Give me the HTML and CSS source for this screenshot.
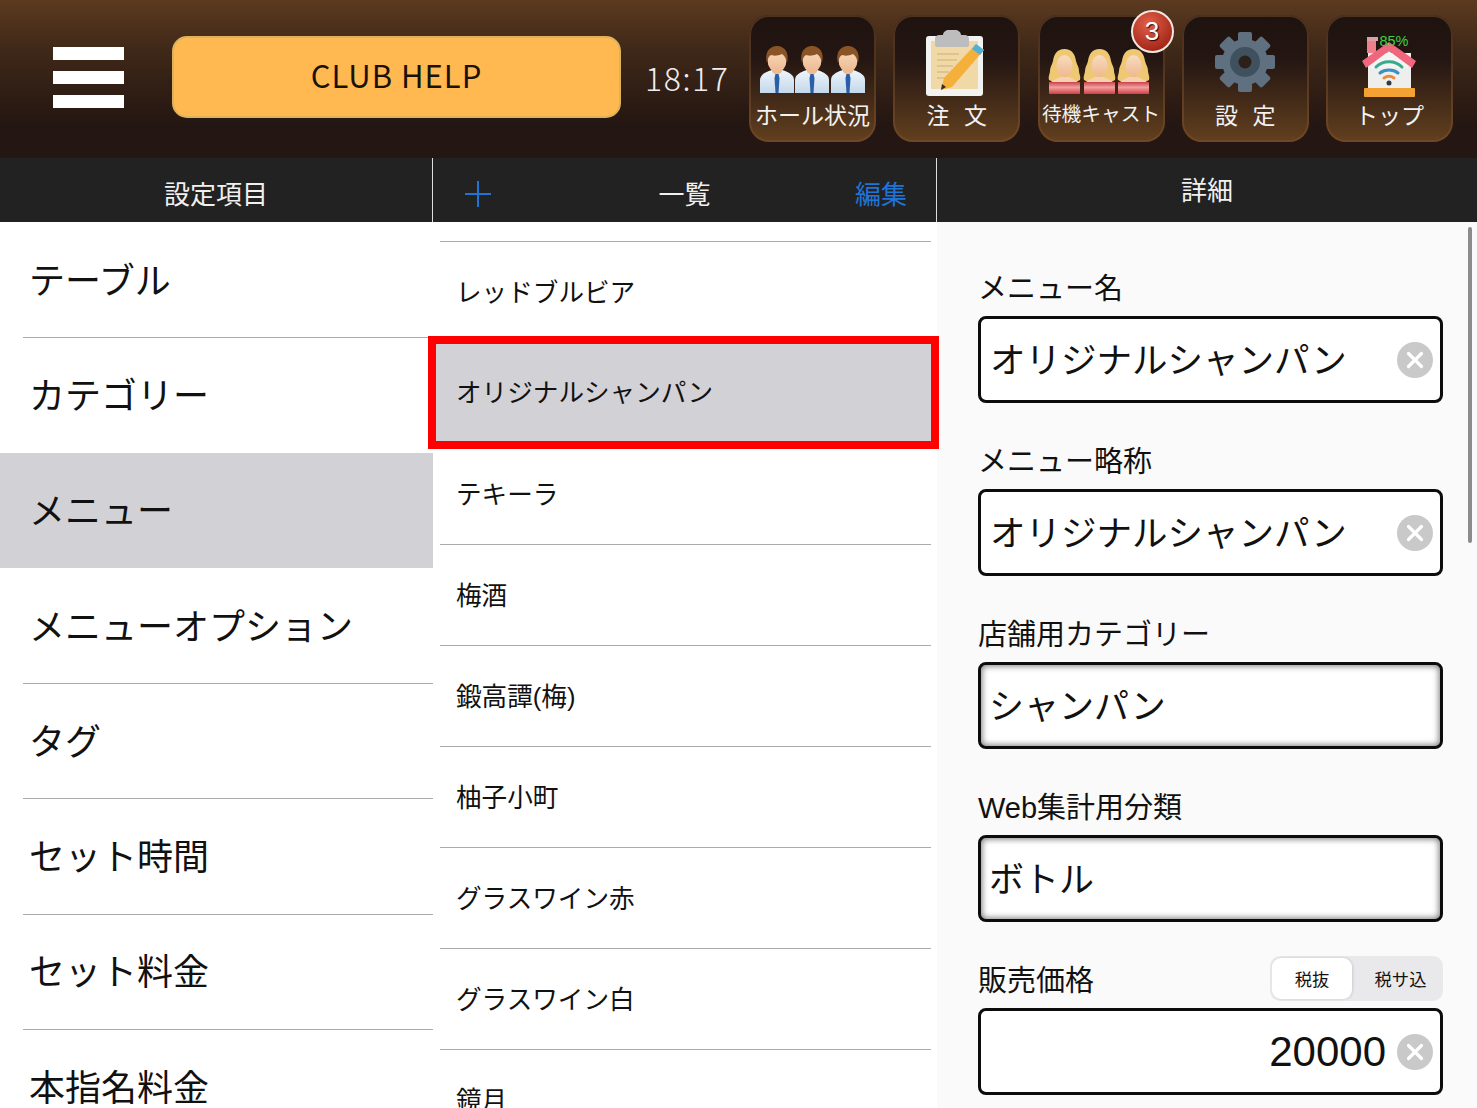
FILE: index.html
```html
<!DOCTYPE html>
<html lang="ja">
<head>
<meta charset="utf-8">
<title>CLUB HELP</title>
<link rel="stylesheet" href="styles.css">
</head>
<body>
<svg class="defs" width="0" height="0" aria-hidden="true">
  <defs>
    <linearGradient id="skin" x1="0" y1="0" x2="0" y2="1"><stop offset="0" stop-color="#f8dcc0"/><stop offset="1" stop-color="#eeb88e"/></linearGradient>
    <linearGradient id="shirt" x1="0" y1="0" x2="0" y2="1"><stop offset="0" stop-color="#eef5fb"/><stop offset="1" stop-color="#c3d8ea"/></linearGradient>
    <linearGradient id="dress" x1="0" y1="0" x2="0" y2="1"><stop offset="0" stop-color="#c9434a"/><stop offset=".45" stop-color="#f0a0a0"/><stop offset="1" stop-color="#d63c44"/></linearGradient>
    <symbol id="man" viewBox="0 0 36 48">
      <path d="M1 47V34c0-5 5-8 12-10h10c7 2 12 5 12 10v13z" fill="url(#shirt)"/>
      <path d="M13 18h10v8l-5 4-5-4z" fill="#eebd96"/>
      <ellipse cx="18" cy="14" rx="9.500" ry="12.500" fill="url(#skin)"/>
      <path d="M8 17C5 5 12 0 18 0s13 5 10 17c-1-5-3-8-5-9-4 2-9 2-11 1-2 1-3 3-4 8z" fill="#8a5426"/>
      <path d="M16.500 28h3l1 4-1 15h-3l-1-15z" fill="#2a5ea6"/>
    </symbol>
    <symbol id="woman" viewBox="0 0 35 46">
      <path d="M17.500 0C10 0 7 5 6 12c-1 4-3 6-3 10 0 3-2 5-1 9l6 3h19l6-3c1-4-1-6-1-9 0-4-2-6-3-10C28 5 25 0 17.500 0z" fill="#eec873"/>
      <path d="M3 34c3-3 8-5 10-6h9c2 1 7 3 10 6v0H3z" fill="#f6d0b0"/>
      <ellipse cx="17.500" cy="17" rx="8" ry="11" fill="url(#skin)"/>
      <path d="M2 33h31v12H2z" fill="url(#dress)"/>
    </symbol>
    <symbol id="clear" viewBox="0 0 36 36">
      <circle cx="18" cy="18" r="18" fill="#c9c9c9"/>
      <path d="M11.500 11.500l13 13m0-13l-13 13" stroke="#fff" stroke-width="3.200" stroke-linecap="round"/>
    </symbol>
  </defs>
</svg>

<header class="topbar">
  <div class="burger"><span></span><span></span><span></span></div>
  <div class="club-btn">CLUB HELP</div>
  <div class="clock">18:17</div>
  <nav class="tools">
    <div class="tool">
      <svg class="tool-icon" viewBox="0 0 127 86">
        <use href="#man" x="10" y="31" width="36" height="48"/>
        <use href="#man" x="45" y="31" width="36" height="48"/>
        <use href="#man" x="81" y="31" width="36" height="48"/>
      </svg>
      <span class="tool-label">ホール状況</span>
    </div>
    <div class="tool">
      <svg class="tool-icon" viewBox="0 0 127 86">
        <rect x="33" y="21" width="57" height="60" rx="3" fill="#f2f2f0"/>
        <rect x="38" y="26" width="47" height="48" fill="#f0d9a6"/>
        <path d="M44 39h22M44 45h20M44 51h16M44 57h12M44 63h10" stroke="#d8bd88" stroke-width="1.500"/>
        <path d="M42 24c0-3 2-4 5-4h3c0-3 3-5 6-5h6c3 0 6 2 6 5h3c3 0 5 1 5 4v6c0 1-1 2-2 2H44c-1 0-2-1-2-2z" fill="#bdbdbd"/>
        <path d="M83 29l8 6-32 37-11 3 3-12z" fill="#f5b03c"/>
        <path d="M83 29l8 6-4 5-8-6z" fill="#4fb0dc"/>
        <path d="M48 75l1-6 4 3z" fill="#3a2a20"/>
      </svg>
      <span class="tool-label tool-spaced">注 文</span>
    </div>
    <div class="tool tool-alert">
      <svg class="tool-icon" viewBox="0 0 127 86">
        <use href="#woman" x="9" y="34" width="35" height="46"/>
        <use href="#woman" x="44" y="34" width="35" height="46"/>
        <use href="#woman" x="78" y="34" width="35" height="46"/>
      </svg>
      <span class="tool-label tool-small">待機キャスト</span>
      <span class="badge">3</span>
    </div>
    <div class="tool">
      <svg class="tool-icon" viewBox="0 0 127 86">
        <g fill="#5f7080" transform="translate(63 47)">
          <circle r="23"/>
          <rect x="-7" y="-30" width="14" height="60" rx="2"/>
          <rect x="-7" y="-30" width="14" height="60" rx="2" transform="rotate(45)"/>
          <rect x="-7" y="-30" width="14" height="60" rx="2" transform="rotate(90)"/>
          <rect x="-7" y="-30" width="14" height="60" rx="2" transform="rotate(135)"/>
          <circle r="15" fill="#3f505e"/>
          <circle r="6.500" fill="#2c2019"/>
        </g>
      </svg>
      <span class="tool-label tool-spaced">設 定</span>
    </div>
    <div class="tool">
      <svg class="tool-icon" viewBox="0 0 127 86">
        <rect x="41" y="22" width="9" height="16" fill="#f07f8c"/>
        <rect x="41" y="22" width="11" height="4" fill="#d9a0a8"/>
        <rect x="42" y="38" width="43" height="37" fill="#eeeeec"/>
        <path d="M36 46l27-19 27 19-4 7-23-17-23 17z" fill="#f0667c"/>
        <path d="M44 51l19-15 19 15v2H44z" fill="#f4f4f2"/>
        <rect x="38" y="73" width="51" height="9" rx="1" fill="#f5a234"/>
        <g fill="none" stroke-width="3" stroke-linecap="round">
          <path d="M50 52c7-7 19-7 26 0" stroke="#37a98c"/>
          <path d="M54 58c5-4 13-4 18 0" stroke="#3a8fc4"/>
          <path d="M58 63c3-2 7-2 10 0" stroke="#ea8a3a"/>
        </g>
        <circle cx="63" cy="68" r="2.500" fill="#2c3a4a"/>
        <text x="68" y="31" class="battery">85%</text>
      </svg>
      <span class="tool-label">トップ</span>
    </div>
  </nav>
</header>

<div class="subbar">
  <div class="sub sub-left">設定項目</div>
  <div class="sub sub-mid">
    <svg class="plus" viewBox="0 0 26 26"><path d="M13 0v26M0 13h26" stroke="#1f74d6" stroke-width="2"/></svg>
    <span>一覧</span>
    <span class="edit">編集</span>
  </div>
  <div class="sub sub-right">詳細</div>
</div>

<main class="panes">
  <ul class="settings">
    <li>テーブル</li>
    <li class="ruled">カテゴリー</li>
    <li class="active">メニュー</li>
    <li>メニューオプション</li>
    <li class="ruled">タグ</li>
    <li class="ruled">セット時間</li>
    <li class="ruled">セット料金</li>
    <li class="ruled">本指名料金</li>
  </ul>
  <ul class="items">
    <li>レッドブルビア</li>
    <li class="picked">オリジナルシャンパン</li>
    <li>テキーラ</li>
    <li>梅酒</li>
    <li>鍛高譚(梅)</li>
    <li>柚子小町</li>
    <li>グラスワイン赤</li>
    <li>グラスワイン白</li>
    <li>鏡月</li>
  </ul>
  <section class="detail">
    <div class="field">
      <div class="field-label">メニュー名</div>
      <div class="box"><span>オリジナルシャンパン</span><svg class="clear"><use href="#clear"/></svg></div>
    </div>
    <div class="field">
      <div class="field-label">メニュー略称</div>
      <div class="box"><span>オリジナルシャンパン</span><svg class="clear"><use href="#clear"/></svg></div>
    </div>
    <div class="field">
      <div class="field-label">店舗用カテゴリー</div>
      <div class="box box-select"><span>シャンパン</span></div>
    </div>
    <div class="field">
      <div class="field-label">Web集計用分類</div>
      <div class="box box-select"><span>ボトル</span></div>
    </div>
    <div class="field">
      <div class="field-label field-row">
        <span>販売価格</span>
        <div class="segment"><span class="seg seg-on">税抜</span><span class="seg seg-off">税サ込</span></div>
      </div>
      <div class="box box-num"><span>20000</span><svg class="clear"><use href="#clear"/></svg></div>
    </div>
    <div class="scrollbar"></div>
  </section>
</main>
</body>
</html>
```
FILE: styles.css
```css
* { box-sizing: border-box; }
html, body { margin: 0; padding: 0; }
body {
  width: 1477px;
  height: 1108px;
  overflow: hidden;
  background: #fff;
  color: #111;
  font-family: "Liberation Sans", "Noto Sans CJK JP", sans-serif;
}
ul { list-style: none; margin: 0; padding: 0; }
.defs { position: absolute; }

.topbar {
  height: 158px;
  display: flex;
  align-items: center;
  background: linear-gradient(#5c3a20 0, #3f2818 50px, #241612 125px, #241612 100%);
}
.burger {
  width: 71px;
  margin: 0 0 4px 53px;
  display: flex;
  flex-direction: column;
  gap: 11px;
}
.burger span { height: 13px; background: #fff; }
.club-btn {
  width: 449px;
  height: 82px;
  margin: 0 0 5px 48px;
  padding-bottom: 4px;
  display: flex;
  align-items: center;
  justify-content: center;
  background: #ffb950;
  border: 2px solid #dcb25c;
  border-radius: 15px;
  color: #1a1208;
  font-family: "Noto Sans CJK JP", sans-serif;
  font-size: 31px;
  font-weight: 400;
  letter-spacing: 1px;
  white-space: nowrap;
}
.clock {
  margin: 0 0 4px 24px;
  color: #eee;
  font-family: "Noto Sans CJK JP", sans-serif;
  font-size: 32px;
  font-weight: 300;
  letter-spacing: 1.600px;
}
.tools {
  margin: 0 0 1px auto;
  padding-right: 24px;
  display: flex;
  gap: 17.250px;
}
.tool {
  position: relative;
  width: 127px;
  height: 127px;
  border-radius: 20px;
  background: linear-gradient(#1e1310 0, #241612 35%, #63401f 100%);
  box-shadow: inset 0 0 0 2px rgba(125, 80, 42, .5);
  display: flex;
  flex-direction: column;
  align-items: center;
}
.tool-icon { width: 127px; height: 86px; flex: none; display: block; }
.tool-label {
  height: 30px;
  line-height: 30px;
  color: #f2f2f2;
  font-size: 23px;
  white-space: nowrap;
}
.tool-spaced { word-spacing: 8px; }
.tool-small { font-size: 19.700px; line-height: 26px; }
.badge {
  position: absolute;
  top: -5px;
  right: -19px;
  width: 43px;
  height: 43px;
  margin-right: 10px;
  display: flex;
  align-items: center;
  justify-content: center;
  border-radius: 50%;
  border: 2px solid #f3e7e0;
  background: radial-gradient(circle at 40% 30%, #e2604a, #8f1408);
  color: #fff;
  font-size: 26px;
  text-shadow: 1px 1px 1px #300;
}
.battery {
  font-family: "Liberation Sans", sans-serif;
  font-size: 14.500px;
  fill: #3fd13f;
  text-anchor: middle;
}

.subbar {
  height: 64px;
  display: flex;
  background: #222;
  color: #f0f0f0;
  font-size: 26px;
}
.sub { display: flex; align-items: center; justify-content: center; }
.sub-left { width: 433px; border-right: 1px solid #ddd; padding: 10px 0 6px; }
.sub-mid {
  width: 504px;
  border-right: 1px solid #ddd;
  display: grid;
  grid-template-columns: 1fr auto 1fr;
  padding: 10px 32px 6px;
}
.plus { width: 26px; height: 26px; margin-top: 4px; justify-self: start; }
.edit { color: #1f74d6; justify-self: end; margin-right: -3px; }
.sub-right { flex: 1; padding: 3px 0 7px; }

.panes { height: 886px; display: flex; overflow: hidden; }
.settings { width: 433px; flex: none; }
.settings li {
  height: 115.300px;
  padding: 0 0 4px 29px;
  display: flex;
  align-items: center;
  font-size: 36px;
}
.settings li.ruled { background: linear-gradient(#aaa, #aaa) no-repeat 23px 0 / 410px 1px; }
.settings li.active { background: #d1d1d6; }

.items {
  width: 504px;
  flex: none;
  padding: 19px 6px 0 7px;
}
.items li {
  position: relative;
  height: 101px;
  border-top: 1px solid #aaa;
  padding: 0 0 4px 16px;
  display: flex;
  align-items: center;
  font-size: 25.600px;
}
.items li.picked {
  z-index: 1;
  background: #d1d1d6;
  border-top: 0;
  box-shadow: -4px 0 0 #d1d1d6;
}
.items li.picked::after {
  content: "";
  position: absolute;
  top: -6px;
  left: -12px;
  right: -8px;
  bottom: -6px;
  border: 8px solid #f00;
}

.detail {
  position: relative;
  flex: 1;
  background: #fafafa;
  padding: 50px 34px 0 41px;
  display: flex;
  flex-direction: column;
  gap: 15px;
}
.field { height: 158px; flex: none; }
.field-label {
  height: 44px;
  padding-bottom: 16px;
  display: flex;
  align-items: center;
  font-size: 29px;
}
.field-row { justify-content: space-between; }
.box {
  height: 87px;
  display: flex;
  align-items: center;
  justify-content: space-between;
  border: 3px solid #0c0c0c;
  border-radius: 8px;
  background: #fff;
  padding: 0 7px 5px 9px;
  font-size: 35.500px;
}
.clear { width: 36px; height: 36px; flex: none; margin-top: 5px; }
.box-select {
  padding-left: 8px;
  font-size: 35px;
  box-shadow: inset 0 0 6px 1px #777;
}
.box-num {
  justify-content: flex-end;
  gap: 11px;
  padding-bottom: 0;
  font-size: 42px;
}
.box-num .clear { margin-top: 0; }
.segment {
  width: 173px;
  height: 45px;
  flex: none;
  padding: 2px;
  display: flex;
  border-radius: 10px;
  background: #e9e9eb;
  font-size: 17.300px;
}
.seg {
  flex: 1;
  display: flex;
  align-items: center;
  justify-content: center;
}
.seg-off { padding-left: 8px; }
.seg-on {
  flex: none;
  width: 80px;
  background: #fff;
  border-radius: 9px;
  box-shadow: 1px 0 3px rgba(0, 0, 0, .12);
}
.scrollbar {
  position: absolute;
  top: 5px;
  right: 5px;
  width: 4px;
  height: 316px;
  border-radius: 2px;
  background: #8c8c8c;
}
```
